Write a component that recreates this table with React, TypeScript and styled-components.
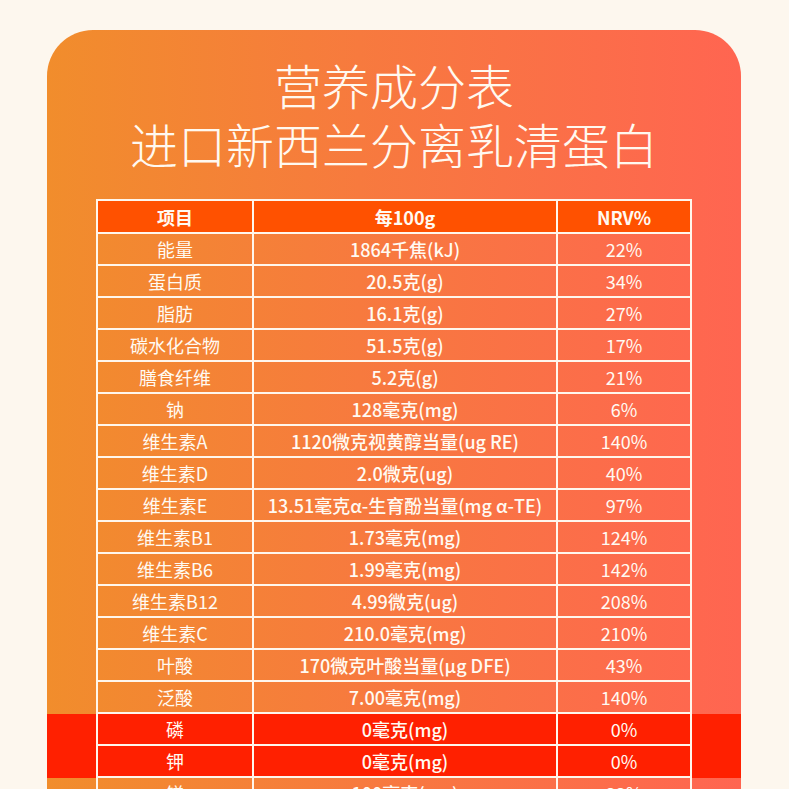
import React from "react";
import styled, { createGlobalStyle } from "styled-components";

const Global = createGlobalStyle`
  html, body {
    margin: 0;
    padding: 0;
    background: #fdf7ee;
    font-family: "Noto Sans CJK SC", "Noto Sans", sans-serif;
  }
  #root { overflow: hidden; }
`;

const Page = styled.div`
  padding-top: 30px;
  padding-left: 47px;
  height: 789px;
  box-sizing: border-box;
  overflow: hidden;
`;

const Card = styled.section`
  width: 694px;
  min-height: 900px;
  box-sizing: border-box;
  padding: 25px 49px 0;
  border-radius: 46px 46px 0 0;
  background: linear-gradient(90deg, #f18d2c 0%, #f77a3e 45%, #ff6551 100%);
`;

const Title = styled.h1`
  margin: 0 0 26px;
  text-align: center;
  color: #fff9f0;
  font-size: 48px;
  line-height: 59px;
  font-weight: 300;
  letter-spacing: 0;
`;

const TitleLine = styled.span`
  display: block;
`;

const Table = styled.div`
  display: flex;
  flex-direction: column;
  width: 596px;
`;

const Row = styled.div<{ $hl?: boolean }>`
  display: grid;
  grid-template-columns: 158px 304px 134px;
  ${(p) =>
    p.$hl
      ? `
    margin: 0 -49px;
    padding: 0 49px;
    background: #ff2000;
  `
      : ""}
`;

const Cell = styled.div<{ $head?: boolean; $mid?: boolean }>`
  box-sizing: border-box;
  display: flex;
  align-items: center;
  justify-content: center;
  height: ${(p) => (p.$head ? 35 : 32)}px;
  border-right: 2px solid #fff6ec;
  border-bottom: 2px solid #fff6ec;
  ${(p) => (p.$head ? "border-top: 2px solid #fff6ec; background: #ff5100;" : "")}
  &:first-child {
    border-left: 2px solid #fff6ec;
  }
  color: #fffaf2;
  font-size: 18px;
  font-weight: ${(p) => (p.$head ? 700 : p.$mid ? 500 : 400)};
  white-space: nowrap;
  line-height: 1;
`;

const rows: [string, string, string, boolean?][] = [
  ["能量", "1864千焦(kJ)", "22%"],
  ["蛋白质", "20.5克(g)", "34%"],
  ["脂肪", "16.1克(g)", "27%"],
  ["碳水化合物", "51.5克(g)", "17%"],
  ["膳食纤维", "5.2克(g)", "21%"],
  ["钠", "128毫克(mg)", "6%"],
  ["维生素A", "1120微克视黄醇当量(ug RE)", "140%"],
  ["维生素D", "2.0微克(ug)", "40%"],
  ["维生素E", "13.51毫克α-生育酚当量(mg α-TE)", "97%"],
  ["维生素B1", "1.73毫克(mg)", "124%"],
  ["维生素B6", "1.99毫克(mg)", "142%"],
  ["维生素B12", "4.99微克(ug)", "208%"],
  ["维生素C", "210.0毫克(mg)", "210%"],
  ["叶酸", "170微克叶酸当量(μg DFE)", "43%"],
  ["泛酸", "7.00毫克(mg)", "140%"],
  ["磷", "0毫克(mg)", "0%", true],
  ["钾", "0毫克(mg)", "0%", true],
  ["镁", "100毫克(mg)", "33%"],
];

export default function App() {
  return (
    <>
      <Global />
      <Page>
        <Card>
          <Title>
            <TitleLine>营养成分表</TitleLine>
            <TitleLine>进口新西兰分离乳清蛋白</TitleLine>
          </Title>
          <Table>
            <Row>
              <Cell $head>项目</Cell>
              <Cell $head>每100g</Cell>
              <Cell $head>NRV%</Cell>
            </Row>
            {rows.map(([name, val, nrv, hl]) => (
              <Row key={name} $hl={hl}>
                <Cell>{name}</Cell>
                <Cell $mid>{val}</Cell>
                <Cell>{nrv}</Cell>
              </Row>
            ))}
          </Table>
        </Card>
      </Page>
    </>
  );
}
